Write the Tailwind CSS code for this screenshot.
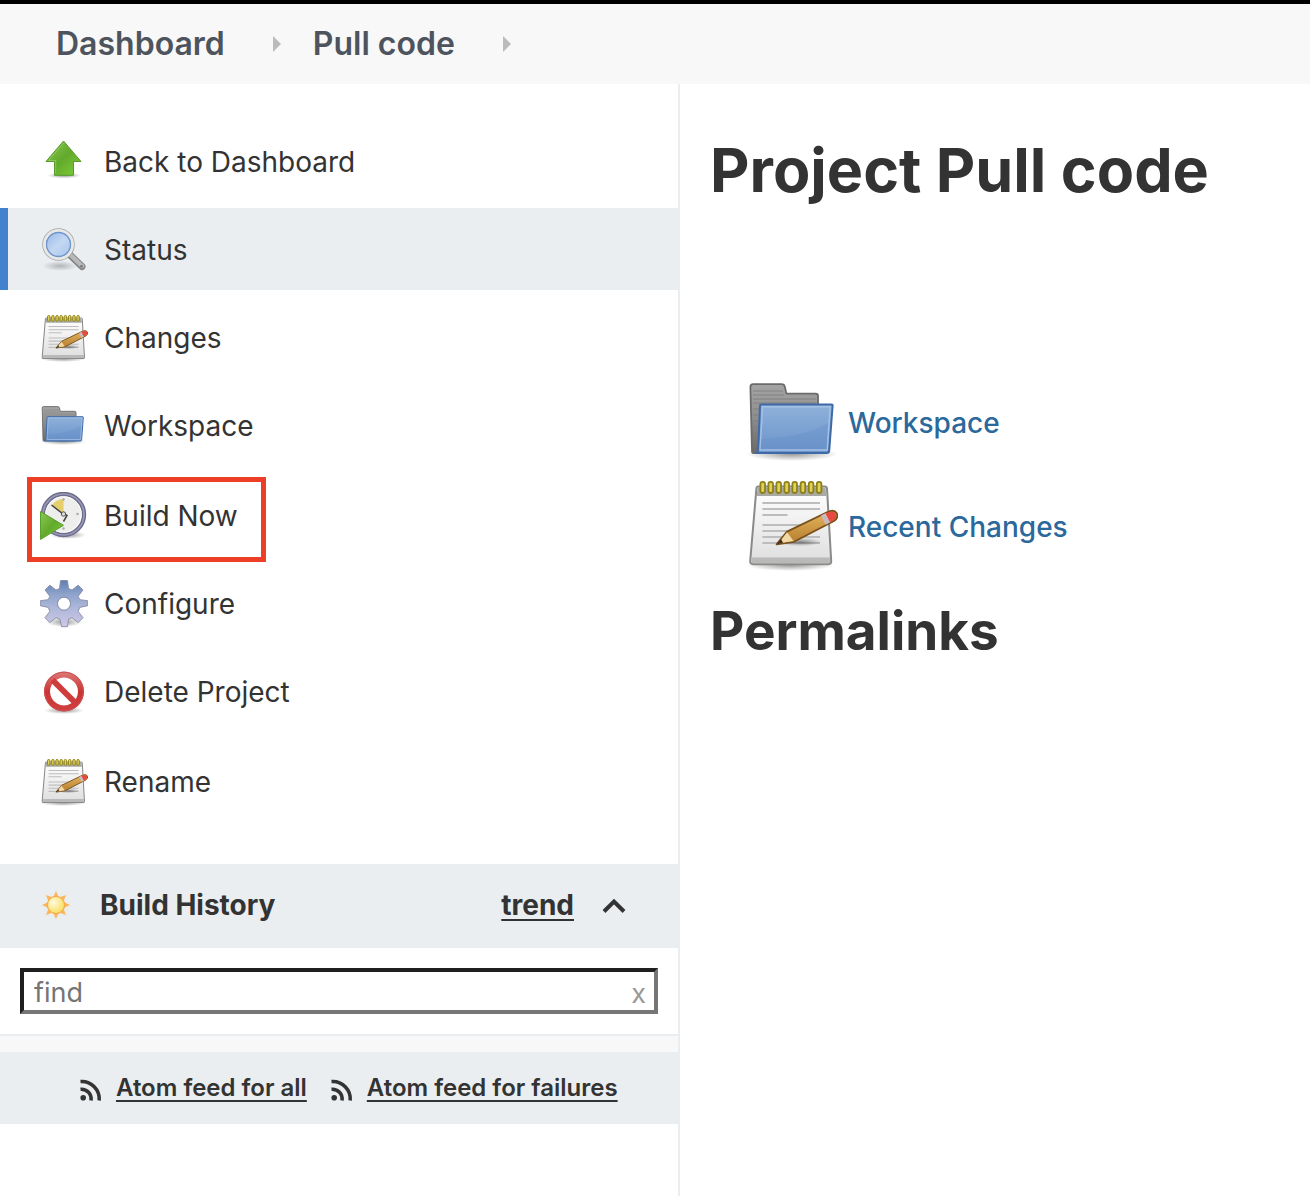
<!DOCTYPE html>
<html lang="en">
<head>
<meta charset="utf-8">
<meta name="viewport" content="width=device-width, initial-scale=1">
<title>Pull code [Jenkins]</title>
<script src="https://cdn.jsdelivr.net/npm/@tailwindcss/browser@4"></script>
</head>
<body class="min-h-screen flex flex-col bg-white font-['Inter',sans-serif] text-[#333333]">

<!-- Shared icon drawings -->
<svg class="absolute w-0 h-0" aria-hidden="true">
  <defs>
    <linearGradient id="paper" x1="0" y1="0" x2="0" y2="1"><stop offset="0" stop-color="#fff"/><stop offset="1" stop-color="#dedede"/></linearGradient>
    <linearGradient id="folderBack" x1="0" y1="0" x2="0" y2="1"><stop offset="0" stop-color="#a5a5a5"/><stop offset=".5" stop-color="#8d8d8d"/><stop offset="1" stop-color="#6a6a6a"/></linearGradient>
    <linearGradient id="folderFront" x1="0" y1="0" x2="0" y2="1"><stop offset="0" stop-color="#8fb1da"/><stop offset="1" stop-color="#6b94cb"/></linearGradient>
    <linearGradient id="green" x1="0" y1="0" x2="1" y2="1"><stop offset="0" stop-color="#8cc653"/><stop offset=".5" stop-color="#62aa2b"/><stop offset="1" stop-color="#80cf3a"/></linearGradient>
    <linearGradient id="gear" x1="0" y1="0" x2="0" y2="1"><stop offset="0" stop-color="#5f7fb0"/><stop offset=".3" stop-color="#8fa3cb"/><stop offset=".6" stop-color="#aeb8da"/><stop offset="1" stop-color="#cfc8e4"/></linearGradient>
    <linearGradient id="red" x1="0" y1="0" x2="0" y2="1"><stop offset="0" stop-color="#dd7a7a"/><stop offset=".5" stop-color="#cc3434"/><stop offset="1" stop-color="#d04040"/></linearGradient>
    <linearGradient id="pencil" x1="0" y1="0" x2="0" y2="1"><stop offset="0" stop-color="#e6b660"/><stop offset="1" stop-color="#b47c2c"/></linearGradient>
    <linearGradient id="lens" x1="0" y1="0" x2="1" y2="1"><stop offset="0" stop-color="#8fb3e6"/><stop offset=".5" stop-color="#c3d7f2"/><stop offset="1" stop-color="#a3c2ec"/></linearGradient>
    <radialGradient id="sun" cx=".35" cy=".35" r=".7"><stop offset="0" stop-color="#fffbe0"/><stop offset="1" stop-color="#f9dd58"/></radialGradient>
    <radialGradient id="shade"><stop offset="0" stop-color="#000" stop-opacity=".4"/><stop offset="1" stop-color="#000" stop-opacity="0"/></radialGradient>
  </defs>
  <symbol id="i-notepad" viewBox="0 0 48 48" overflow="visible">
    <ellipse cx="24" cy="43" rx="22" ry="3" fill="url(#shade)"/>
    <path d="M8.2 3.8h33.2q1 0 1.1 1L44.6 41q.1 1.600-1.400 1.600H5.600Q4 42.600 4.100 41L7.200 4.800q.1-1 1-1Z" fill="url(#paper)" stroke="#8a8a86" stroke-width="1"/>
    <path d="M7.800 4.300h34l.3 4.200H7.400Z" fill="#a9a9a2"/>
    <path d="M5 39.200h39l.1 2.300q0 .6-.7.6H5.500q-.8 0-.7-.8Z" fill="#b9b9b9"/>
    <path d="M10.200 12H39M10.200 15H39M10.200 18h12.600M10.200 23H33M10.200 26H28M10.200 29H39M10.200 32H39" stroke="#bdbdbd" stroke-width="1"/>
    <g fill="#e0d254" stroke="#8d8018" stroke-width=".9"><rect x="9.200" y="1.400" width="2.300" height="5.600" rx="1.100"/><rect x="13.200" y="1.400" width="2.300" height="5.600" rx="1.100"/><rect x="17.200" y="1.400" width="2.300" height="5.600" rx="1.100"/><rect x="21.200" y="1.400" width="2.300" height="5.600" rx="1.100"/><rect x="25.200" y="1.400" width="2.300" height="5.600" rx="1.100"/><rect x="29.300" y="1.400" width="2.300" height="5.600" rx="1.100"/><rect x="33.400" y="1.400" width="2.300" height="5.600" rx="1.100"/><rect x="37.400" y="1.400" width="2.300" height="5.600" rx="1.100"/></g>
    <ellipse cx="29" cy="31.500" rx="11" ry="2.200" fill="url(#shade)"/>
    <path d="M22.500 26.300 42.500 16.600q3.500-1.600 4.800.4 1.200 2.300-1.300 4L26 31.400l-8.700 1.300Z" fill="url(#pencil)" stroke="#79501c" stroke-width=".9" stroke-linejoin="round"/>
    <path d="M22.500 26.600 25.800 31l-7.600 1.300Z" fill="#f0d9a4"/><path d="m19.500 30 1 1.900-3.200.8Z" fill="#40301c"/>
    <path d="M39.500 18.300 42 17l2.300 4.500-2.500 1.400Z" fill="#c9b9bd"/>
    <path d="M41.800 17.200q3.500-1.800 4.900-.1 1.200 2-1 3.500L44 21.500Z" fill="#e8483f"/>
  </symbol>
  <symbol id="i-folder" viewBox="0 0 48 48" overflow="visible">
    <ellipse cx="25" cy="39.500" rx="23" ry="3.500" fill="url(#shade)"/>
    <path d="M5.600 39Q5 39 5 38L4.200 6q0-1.400 1.400-1.400h14.200q1.300 0 1.600 1.200l.8 3.500h14.600q1.200 0 1.200 1.200V39Z" fill="url(#folderBack)" stroke="#6b6b6b" stroke-width=".9"/>
    <path d="M5.500 8h15M5.500 10h15.500M5.500 12H37M5.500 14H37M5.500 17H9M5.500 20H9M5.500 23H8.500M5.500 26H8.500M5.500 29H8" stroke="#7c7c7c" stroke-width=".4"/>
    <path d="M9.600 14.700h35.200q.6 0 .5.800l-1.700 22.300q-.1 1.200-1.200 1.200H6.800q1.200-.3 1.300-1.700L9 15.400q0-.7.600-.7Z" fill="url(#folderFront)" stroke="#3f6aa8" stroke-width="1"/>
    <path d="M10.300 15.900h33.800L42.600 37.500H9Z" fill="none" stroke="#a5c1e4" stroke-width=".7"/>
    <path d="M9.500 32q22-1 33.500-8l-1 13H9.300Z" fill="#5f8bc8" opacity=".3"/>
  </symbol>
  <symbol id="i-feed" viewBox="0 0 22 22">
    <circle cx="3.200" cy="18.700" r="2.800" fill="currentColor"/>
    <path d="M.5 10.300A9.700 9.700 0 0 1 11 21.500M.5 2.500A17.500 17.500 0 0 1 19.200 21.500" fill="none" stroke="currentColor" stroke-width="3.600"/>
  </symbol>
</svg>

<header class="border-t-4 border-black bg-[#f8f8f8]">
  <nav aria-label="Breadcrumb" class="flex h-20 items-center pl-14 text-[32px] font-semibold text-[#4d545d]">
    <a href="#">Dashboard</a>
    <svg class="ml-12 mr-8 h-4 w-2 shrink-0" viewBox="0 0 8 16" aria-hidden="true"><path d="M0 0 8 8 0 16Z" fill="#bbb"/></svg>
    <a href="#">Pull code</a>
    <svg class="ml-12 h-4 w-2 shrink-0" viewBox="0 0 8 16" aria-hidden="true"><path d="M0 0 8 8 0 16Z" fill="#bbb"/></svg>
  </nav>
</header>

<div class="flex flex-1">
  <aside class="w-[680px] shrink-0 border-r-2 border-[#eaeef1]">
    <ul class="flex flex-col gap-1.5 pt-9 text-[28px] font-normal">
      <li><a href="#" class="flex h-[82px] items-center gap-4 pt-0.5 pl-10">
        <svg class="size-12" viewBox="0 0 48 48" aria-hidden="true"><ellipse cx="24" cy="37.500" rx="17" ry="3" fill="url(#shade)"/><path d="M23.500 3 41 23.500h-7.500v13.800H14.500V23.500H6Z" fill="url(#green)" stroke="#569a2a" stroke-linejoin="round"/><path d="M15.700 36V22.500H8.500L23.500 5" fill="none" stroke="#a5dc74" stroke-width=".8" opacity=".7"/></svg>
        Back to Dashboard</a></li>
      <li><a href="#" aria-current="page" class="flex h-[82px] items-center gap-4 border-l-8 border-[#4083cc] bg-[#eaeef1] pt-0.5 pl-8">
        <svg class="size-12" viewBox="0 0 48 48" aria-hidden="true"><ellipse cx="20" cy="40" rx="18" ry="5" fill="url(#shade)" opacity=".6"/><path d="m29.500 28.500 12.500 12" stroke="#858585" stroke-width="7" stroke-linecap="round"/><path d="m29.500 28 12.500 12" stroke="#b8b8b8" stroke-width="4.500" stroke-linecap="round"/><circle cx="41.500" cy="40.300" r="1.300" fill="#777"/><circle cx="18.500" cy="18.500" r="14" fill="url(#lens)" stroke="#a2a2a2" stroke-width="4.500"/><circle cx="18.500" cy="18.500" r="14" fill="none" stroke="#e8e8e6" stroke-width="3"/><circle cx="18.500" cy="18.500" r="12" fill="none" stroke="#6f95cf" stroke-width="1.300"/></svg>
        Status</a></li>
      <li><a href="#" class="flex h-[82px] items-center gap-4 pt-0.5 pl-10">
        <svg class="size-12" viewBox="2 0 46 46" aria-hidden="true"><use href="#i-notepad" width="48" height="48"/></svg>
        Changes</a></li>
      <li><a href="#" class="flex h-[82px] items-center gap-4 pt-0.5 pl-10">
        <svg class="size-12" viewBox="2 0 48 48" aria-hidden="true"><use href="#i-folder" width="48" height="48"/></svg>
        Workspace</a></li>
      <li class="relative mt-0.5"><a href="#" class="flex h-[82px] items-center gap-4 pt-0.5 pl-10">
        <svg class="size-12" viewBox="0 0 48 48" aria-hidden="true"><ellipse cx="28" cy="43" rx="18" ry="4" fill="url(#shade)"/><circle cx="23.500" cy="22.500" r="20.500" fill="#eeeeec" stroke="#6d6c8f" stroke-width="4.400"/><circle cx="23.500" cy="22.500" r="20.500" fill="none" stroke="#9a99b6" stroke-width="1.600"/><circle cx="23.500" cy="22.500" r="17.800" fill="none" stroke="#fff" stroke-width="1"/><path d="M23.500 21.500 12 13.500Q16 7 23.500 7Z" fill="#e5cf6c"/><path d="M11.500 13 23 22M23.500 21l3.500 2.500-3.500 6" fill="none" stroke="#41423e" stroke-width="1.500"/><circle cx="23.500" cy="22" r="2.200" fill="#ddd" stroke="#444" stroke-width=".9"/><g fill="#aaa"><circle cx="37.500" cy="22" r="1.200"/><circle cx="23.500" cy="7.500" r="1.200"/><circle cx="23.500" cy="36.500" r="1.200"/></g><path d="M.5 19.500 23.500 33.300.5 47.500Z" fill="url(#green)" stroke="#59a02c"/></svg>
        Build Now</a>
        <span class="pointer-events-none absolute left-[27px] top-[3px] h-[85px] w-[239px] border-5 border-[#ed3f28]"></span></li>
      <li><a href="#" class="flex h-[82px] items-center gap-4 pt-0.5 pl-10">
        <svg class="size-12" viewBox="0 0 48 48" aria-hidden="true"><ellipse cx="24" cy="42" rx="18" ry="5" fill="url(#shade)"/>
          <path d="M20.500.5h7l1 8 3.500 1.500 6.200-4.800 4.800 4.800-4.800 6.200 1.500 3.500 8 1v5l-8 1.700-1.500 4.100 4.800 6.200-4.800 4.800-6.200-4.800-3.500 1.500-1 7.500h-6l-1.500-7.500L16 37.700l-6.200 4.800L5 37.700l4.800-6.200-1.500-4.100-8-1.700v-5l8-1 1.500-3.500L5 10l4.800-4.800L16 10l3.500-1.500Z" fill="url(#gear)" stroke="#8c93ac" stroke-width="1" stroke-linejoin="round"/><circle cx="24" cy="23.700" r="6.500" fill="#fff" stroke="#8088a8" stroke-width="1"/></svg>
        Configure</a></li>
      <li><a href="#" class="flex h-[82px] items-center gap-4 pt-0.5 pl-10">
        <svg class="size-12" viewBox="0 0 48 48" aria-hidden="true"><ellipse cx="24" cy="42.500" rx="20" ry="3.500" fill="url(#shade)"/><circle cx="24" cy="23.500" r="16.500" fill="#fff"/><path d="M24 3.500a20 20 0 1 0 .01 0ZM24 9.500a14 14 0 1 1-.01 0Z" fill="url(#red)" fill-rule="evenodd"/><path d="M12.500 12 35.500 35" stroke="#cf3c3c" stroke-width="6"/><circle cx="24" cy="23.500" r="19.300" fill="none" stroke="#c95353" stroke-width="1"/></svg>
        Delete Project</a></li>
      <li class="mt-0.5"><a href="#" class="flex h-[82px] items-center gap-4 pt-0.5 pl-10">
        <svg class="size-12" viewBox="2 0 46 46" aria-hidden="true"><use href="#i-notepad" width="48" height="48"/></svg>
        Rename</a></li>
    </ul>

    <section class="mt-[42px]">
      <div class="flex h-[84px] items-center bg-[#eaeef1] pb-0.5 pl-[42px] pr-[52px] text-[28px] font-bold">
        <svg class="mr-[30px] size-7" viewBox="0 0 28 28" aria-hidden="true"><path d="m14 0 2.400 5.200 2.100.9L24 4l-2.100 5.500.9 2.100L28 14l-5.200 2.400-.9 2.100L24 24l-5.500-2.100-2.100.9L14 28l-2.400-5.200-2.100-.9L4 24l2.100-5.500-.9-2.100L0 14l5.200-2.400.9-2.100L4 4l5.500 2.100 2.100-.9Z" fill="#fbb55c"/><circle cx="14" cy="14" r="8.500" fill="url(#sun)" stroke="#f4ac4c" stroke-width="1"/></svg>
        <h2>Build History</h2>
        <a href="#" class="ml-auto underline decoration-2 underline-offset-4">trend</a>
        <button type="button" aria-label="Collapse" class="ml-7"><svg class="h-4 w-6" viewBox="0 0 24 16" fill="none" stroke="#333" stroke-width="4" aria-hidden="true"><path d="M2 14.500 12 4.500 22 14.500"/></svg></button>
      </div>
      <div class="relative p-5">
        <input type="text" aria-label="Filter builds" placeholder="find" class="block h-[46px] w-full border-4 border-t-[#1f1f1f] border-l-[#1f1f1f] border-r-[#767676] border-b-[#767676] pt-0.5 pl-2.5 pr-10 text-[27px] placeholder:text-[#757575]">
        <button type="button" aria-label="Clear" class="absolute right-8 top-[26px] h-9 text-[27px] text-[#999]">x</button>
      </div>
      <div class="h-[18px] border-t-2 border-[#eaeef1] bg-[#f8f8f8]"></div>
      <div class="flex h-[72px] items-center gap-6 bg-[#eaeef1] pl-20 text-[24px] font-semibold">
        <a href="#" class="flex items-center gap-[14px]"><svg class="mt-1 size-[22px]" aria-hidden="true"><use href="#i-feed"/></svg><span class="underline decoration-2 underline-offset-4">Atom feed for all</span></a>
        <a href="#" class="flex items-center gap-[14px]"><svg class="mt-1 size-[22px]" aria-hidden="true"><use href="#i-feed"/></svg><span class="underline decoration-2 underline-offset-4">Atom feed for failures</span></a>
      </div>
    </section>
  </aside>

  <main class="flex-1 pl-[30px] pt-11">
    <h1 class="text-[61px] leading-[84px] font-bold">Project Pull code</h1>
    <ul class="mt-[163px] flex flex-col gap-2 pl-8 text-[28px] font-medium text-[#2b689c]">
      <li><a href="#" class="flex items-center gap-2.5"><svg class="size-24" aria-hidden="true"><use href="#i-folder"/></svg>Workspace</a></li>
      <li><a href="#" class="flex items-center gap-2.5"><svg class="size-24" aria-hidden="true"><use href="#i-notepad"/></svg>Recent Changes</a></li>
    </ul>
    <h2 class="mt-5 text-[53px] leading-[72px] font-bold">Permalinks</h2>
  </main>
</div>
</body>
</html>
